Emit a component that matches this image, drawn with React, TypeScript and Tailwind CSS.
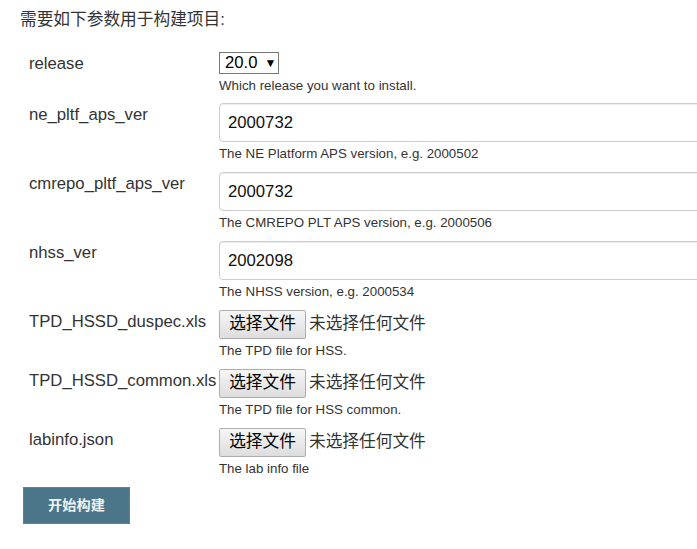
import React from "react";

const font = { fontFamily: '"Liberation Sans", "Noto Sans CJK SC", sans-serif' };

function Label({ children }: { children: React.ReactNode }) {
  return (
    <div className="w-[190px] shrink-0 text-[16.7px] leading-[22px] text-[#333] pt-[1px] whitespace-nowrap">
      {children}
    </div>
  );
}

function Help({ children }: { children: React.ReactNode }) {
  return <div className="text-[13.3px] leading-[17px] text-[#333] mt-[3px]">{children}</div>;
}

function TextRow({ label, value, help }: { label: string; value: string; help: string }) {
  return (
    <div className="flex mb-[10px]">
      <Label>{label}</Label>
      <div className="flex flex-col">
        <div className="w-[520px] h-[39px] border border-[#ccc] rounded-[4px] shadow-[inset_0_1px_1px_rgba(0,0,0,0.075)] bg-white flex items-center px-[8px] text-[16.7px] text-[#111]">
          {value}
        </div>
        <Help>{help}</Help>
      </div>
    </div>
  );
}

function FileRow({ label, help, last }: { label: string; help: string; last?: boolean }) {
  return (
    <div className={last ? "flex mb-[10px]" : "flex mb-[10px]"}>
      <Label>{label}</Label>
      <div className="flex flex-col">
        <div className="flex items-center">
          <div className="w-[87px] h-[29px] border border-[#adadad] rounded-[2px] bg-gradient-to-b from-[#f6f6f6] to-[#dddddd] flex items-center justify-center text-[16.7px] text-black leading-none">
            选择文件
          </div>
          <span className="ml-[3px] text-[16.7px] text-[#333] leading-none">未选择任何文件</span>
        </div>
        <Help>{help}</Help>
      </div>
    </div>
  );
}

export default function App() {
  return (
    <div className="w-[697px] h-[549px] overflow-hidden bg-white" style={font}>
      <div className="pl-[20px] pt-[9px]">
        <div className="text-[16.7px] leading-[22px] text-[#333]">需要如下参数用于构建项目:</div>
        <div className="pl-[9px] mt-[21px]">
          <div className="flex mb-[9px]">
            <Label>release</Label>
            <div className="flex flex-col">
              <div className="w-[60px] h-[22px] border border-[#767676] bg-white flex items-center pl-[5px] text-[16.7px] text-black leading-none">
                <span>20.0</span>
                <span className="ml-[7px] text-[12px]">▼</span>
              </div>
              <Help>Which release you want to install.</Help>
            </div>
          </div>
          <TextRow label="ne_pltf_aps_ver" value="2000732" help="The NE Platform APS version, e.g. 2000502" />
          <TextRow label="cmrepo_pltf_aps_ver" value="2000732" help="The CMREPO PLT APS version, e.g. 2000506" />
          <TextRow label="nhss_ver" value="2002098" help="The NHSS version, e.g. 2000534" />
          <FileRow label="TPD_HSSD_duspec.xls" help="The TPD file for HSS." />
          <FileRow label="TPD_HSSD_common.xls" help="The TPD file for HSS common." />
          <FileRow label="labinfo.json" help="The lab info file" last />
        </div>
        <div className="ml-[3px] w-[107px] h-[37px] bg-[#4b7589] border border-[#5a8599] flex items-center justify-center text-[14.2px] font-bold text-[#eef3f6]">
          开始构建
        </div>
      </div>
    </div>
  );
}
